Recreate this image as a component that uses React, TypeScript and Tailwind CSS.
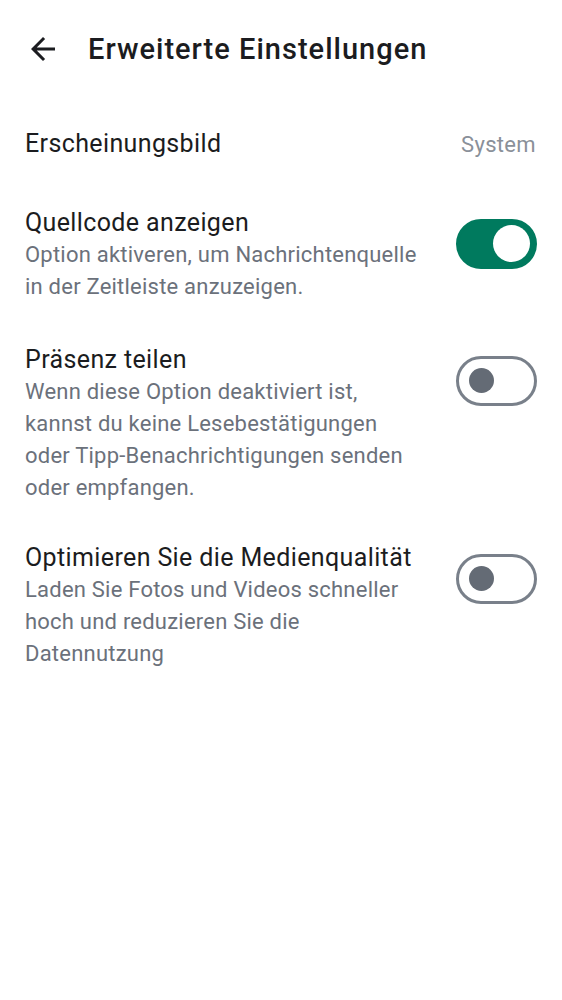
import React, { useState } from "react";

interface ToggleRowProps {
    title: string;
    description: string;
    checked: boolean;
    onChange: (value: boolean) => void;
    className?: string;
}

const Toggle = ({ checked, onChange }: { checked: boolean; onChange: (v: boolean) => void }) => {
    return (
        <button
            type="button"
            onClick={() => onChange(!checked)}
            className={`relative shrink-0 w-[81px] h-[50px] rounded-full box-border ${checked
                ? "bg-[#007a5e] border-[3px] border-[#007a5e]"
                : "bg-white border-[3px] border-[#79808a]"
                }`}
        >
            {checked ? (
                <span className="absolute right-[4px] top-[3.5px] w-[37px] h-[37px] rounded-full bg-white"></span>
            ) : (
                <span className="absolute left-[9.5px] top-[9.5px] w-[25px] h-[25px] rounded-full bg-[#646b75]"></span>
            )}
        </button>
    );
};

const ToggleRow = (props: ToggleRowProps) => {
    return (
        <div className={`flex items-start justify-between gap-4 px-[25px] ${props.className ?? ""}`}>
            <div className="flex flex-col max-w-[400px]">
                <p className="text-[25px] leading-[33px] tracking-[0.015em] text-[#1b1c20]">{props.title}</p>
                <p className="text-[22px] leading-[32px] tracking-[0.01em] text-[#6b717b]">{props.description}</p>
            </div>
            <div className="pt-[12.5px]">
                <Toggle checked={props.checked} onChange={props.onChange} />
            </div>
        </div>
    );
};

export default function App() {
    const [showSource, setShowSource] = useState(true);
    const [sharePresence, setSharePresence] = useState(false);
    const [optimizeMedia, setOptimizeMedia] = useState(false);

    return (
        <div className="w-[562px] min-h-[1000px] bg-white" style={{ fontFamily: "Roboto, 'Noto Sans', sans-serif" }}>
            <div className="flex items-center h-[100px] pl-[25px]">
                <svg width="36" height="36" viewBox="0 0 24 24" className="mb-[2px]">
                    <path
                        d="M20 11H7.83l5.59-5.59L12 4l-8 8 8 8 1.41-1.41L7.83 13H20v-2z"
                        fill="#1b1c20"
                    />
                </svg>
                <h1 className="ml-[27px] text-[29px] font-medium tracking-[0.035em] text-[#1b1c20]">Erweiterte Einstellungen</h1>
            </div>

            <div className="flex items-center justify-between px-[25px] pr-[26px] h-[60px] mt-[14px]">
                <p className="text-[25px] tracking-[0.015em] text-[#1b1c20]">Erscheinungsbild</p>
                <p className="text-[22px] tracking-[0.015em] text-[#8a9099]">System</p>
            </div>

            <div className="flex flex-col mt-[32px]">
                <ToggleRow
                    title="Quellcode anzeigen"
                    description="Option aktiveren, um Nachrichtenquelle in der Zeitleiste anzuzeigen."
                    checked={showSource}
                    onChange={setShowSource}
                />
                <ToggleRow
                    className="mt-[40px]"
                    title="Präsenz teilen"
                    description="Wenn diese Option deaktiviert ist, kannst du keine Lesebestätigungen oder Tipp-Benachrichtigungen senden oder empfangen."
                    checked={sharePresence}
                    onChange={setSharePresence}
                />
                <ToggleRow
                    className="mt-[37px]"
                    title="Optimieren Sie die Medienqualität"
                    description="Laden Sie Fotos und Videos schneller hoch und reduzieren Sie die Datennutzung"
                    checked={optimizeMedia}
                    onChange={setOptimizeMedia}
                />
            </div>
        </div>
    );
}
